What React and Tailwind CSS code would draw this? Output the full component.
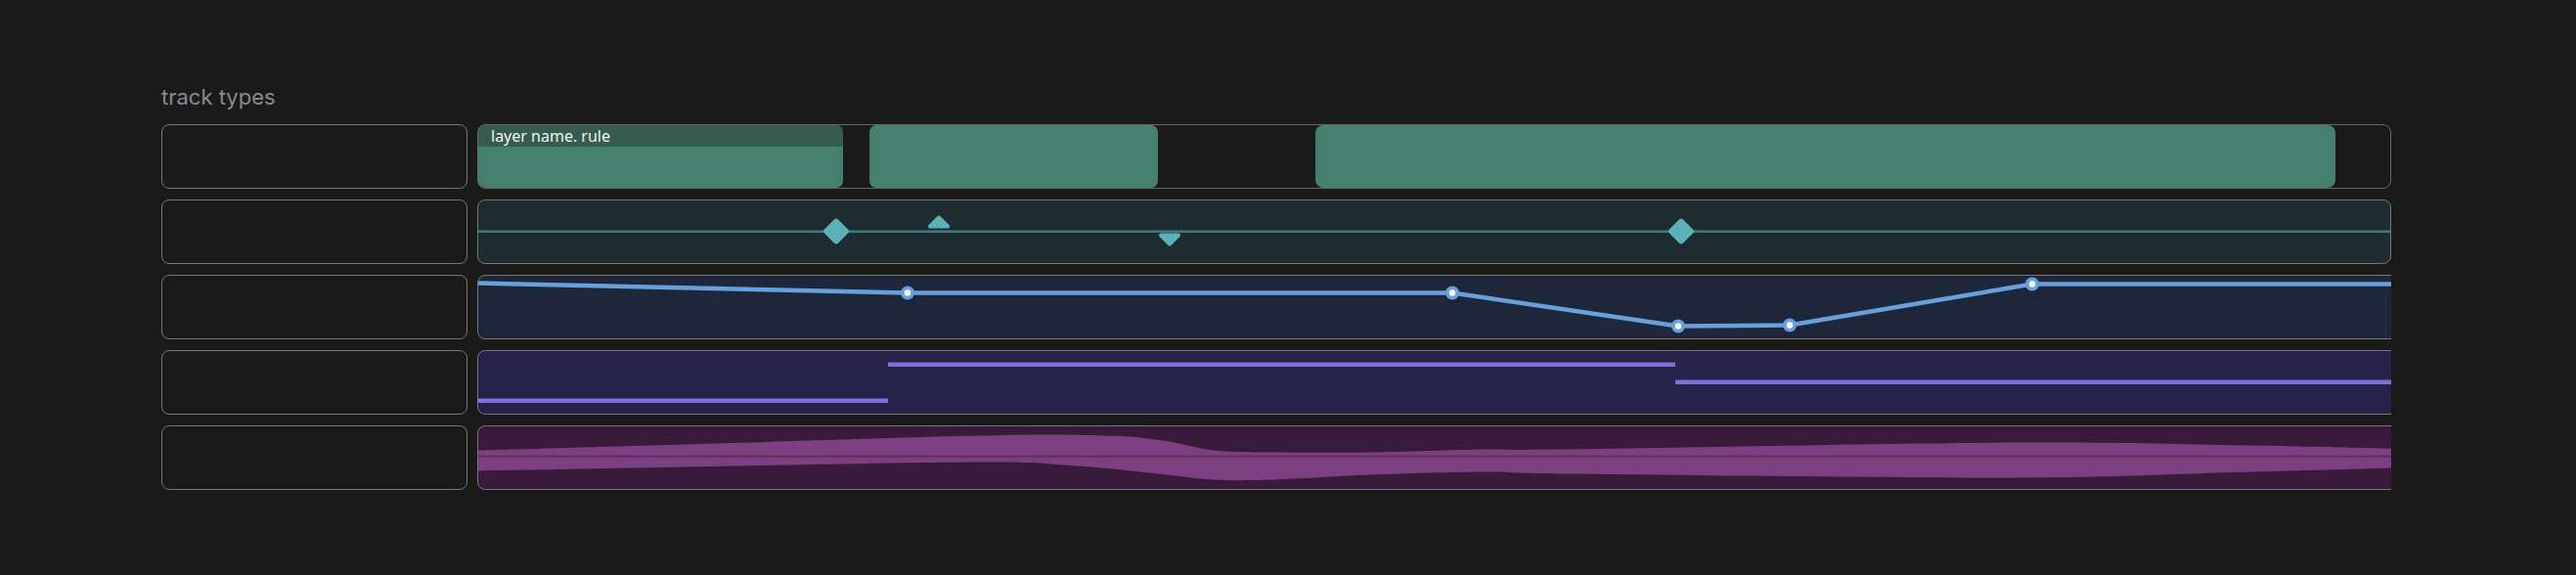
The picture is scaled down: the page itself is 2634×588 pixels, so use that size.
const LANE_W = 1957;

// catmull-rom -> cubic bezier, returns path commands after the first point
function smooth(pts) {
  let d = '';
  for (let i = 0; i < pts.length - 1; i++) {
    const p0 = pts[i - 1] || pts[i];
    const p1 = pts[i];
    const p2 = pts[i + 1];
    const p3 = pts[i + 2] || p2;
    const c1 = [p1[0] + (p2[0] - p0[0]) / 6, p1[1] + (p2[1] - p0[1]) / 6];
    const c2 = [p2[0] - (p3[0] - p1[0]) / 6, p2[1] - (p3[1] - p1[1]) / 6];
    d += ` C ${c1[0]} ${c1[1]} ${c2[0]} ${c2[1]} ${p2[0]} ${p2[1]}`;
  }
  return d;
}

const WAVE_TOP = [[0, 26], [212, 20], [512, 11], [640, 11], [700, 16], [752, 26], [812, 28], [912, 28], [1032, 25], [1112, 25], [1571, 18], [1812, 21], [1990, 25]];
const WAVE_BOTTOM = [[0, 47], [212, 43], [512, 38], [612, 42], [695, 50], [752, 56], [812, 56], [912, 51], [1032, 48], [1112, 50], [1571, 54], [1812, 48], [1990, 43]];

const wavePath = () => {
  const bottomRev = [...WAVE_BOTTOM].reverse();
  return `M ${WAVE_TOP[0][0]} ${WAVE_TOP[0][1]}` + smooth(WAVE_TOP) +
    ` L ${bottomRev[0][0]} ${bottomRev[0][1]}` + smooth(bottomRev) + ' Z';
};

const AUTO_PTS = [[0, 9], [439, 19], [996, 19], [1227, 53], [1341, 52], [1589, 10], [1990, 10]];

const Label = () => (
  <div className="w-[313px] h-[66px] shrink-0 rounded-[8px] border-[1.5px] border-[#767676]" />
);

const ClipsLane = () => (
  <div className="w-[1957px] h-[66px] rounded-[8px] border border-[#666666] overflow-hidden flex">
    <div className="w-[373px] h-full rounded-[7px] bg-[#45806f] overflow-hidden flex flex-col">
      <div className="h-[22px] bg-[#355c4f] px-[13px] text-[16px] leading-[22px] text-[#f2f2f2]" style={{ fontFamily: '"Noto Sans", sans-serif' }}>
        layer name. rule
      </div>
    </div>
    <div className="ml-[27px] w-[295px] h-full rounded-[7px] bg-[#45806f]" />
    <div className="ml-[161px] w-[1043px] h-full rounded-[8px] bg-[#45806f]" />
  </div>
);

const KeyframeLane = () => (
  <div className="w-[1957px] h-[66px] rounded-[8px] border-[1.5px] border-[#767676] bg-[#1e2c30] overflow-hidden">
    <svg width="1957" height="63" viewBox="0 1.5 1957 63" className="block">
      <rect x="0" y="32" width="1957" height="2.5" fill="#3f7a80" />
      <rect x="356" y="23" width="20" height="20" rx="3" fill="#5ab3b8" transform="rotate(45 366 33)" />
      <rect x="1220" y="23" width="20" height="20" rx="3" fill="#5ab3b8" transform="rotate(45 1230 33)" />
      <polygon points="462,28 480,28 471,19" fill="#5ab3b8" stroke="#5ab3b8" strokeWidth="4" strokeLinejoin="round" />
      <polygon points="698,37 716,37 707,46" fill="#5ab3b8" stroke="#5ab3b8" strokeWidth="4" strokeLinejoin="round" />
    </svg>
  </div>
);

const AutomationLane = () => (
  <div className="w-[1990px] h-[66px] rounded-[8px] border-[1.5px] border-[#767676] bg-[#1d2739] overflow-hidden">
    <svg width="1990" height="63" viewBox="0 1.5 1990 63" className="block">
      <polyline points={AUTO_PTS.map(p => p.join(',')).join(' ')} fill="none" stroke="#68a0dc" strokeWidth="4.5" strokeLinejoin="round" />
      {AUTO_PTS.slice(1, -1).map(([x, y]) => (
        <g key={x}>
          <circle cx={x} cy={y} r="7" fill="#68a0dc" />
          <circle cx={x} cy={y} r="3.2" fill="#ffffff" />
        </g>
      ))}
    </svg>
  </div>
);

const StepLane = () => (
  <div className="w-[1990px] h-[66px] rounded-[8px] border-[1.5px] border-[#767676] bg-[#26224a] overflow-hidden">
    <svg width="1990" height="63" viewBox="0 1.5 1990 63" className="block">
      <rect x="0" y="50" width="419" height="4.5" fill="#7c70dc" />
      <rect x="419" y="13" width="805" height="4.5" fill="#7c70dc" />
      <rect x="1224" y="31" width="770" height="4.5" fill="#7c70dc" />
    </svg>
  </div>
);

const WaveLane = () => (
  <div className="w-[1990px] h-[66px] rounded-[8px] border-[1.5px] border-[#767676] bg-[#3a1a3b] overflow-hidden">
    <svg width="1990" height="63" viewBox="0 1.5 1990 63" className="block">
      <path d={wavePath()} fill="#7c3f82" />
      <rect x="0" y="31" width="1990" height="2.5" fill="#66305f" />
    </svg>
  </div>
);

export default function App() {
  const lanes = [ClipsLane, KeyframeLane, AutomationLane, StepLane, WaveLane];
  return (
    <div className="w-[2634px] h-[588px] bg-[#1a1a1a] pl-[165px] pt-[85px]" style={{ fontFamily: 'Inter, "Noto Sans", sans-serif' }}>
      <div className="text-[22px] leading-[29px] text-[#8a8a8a] mb-[13px]">track types</div>
      <div className="flex flex-col gap-[11px]">
        {lanes.map((LaneComp, i) => (
          <div key={i} className="flex gap-[10px]">
            <Label />
            <div className="w-[1957px] overflow-hidden">
              <LaneComp />
            </div>
          </div>
        ))}
      </div>
    </div>
  );
}
